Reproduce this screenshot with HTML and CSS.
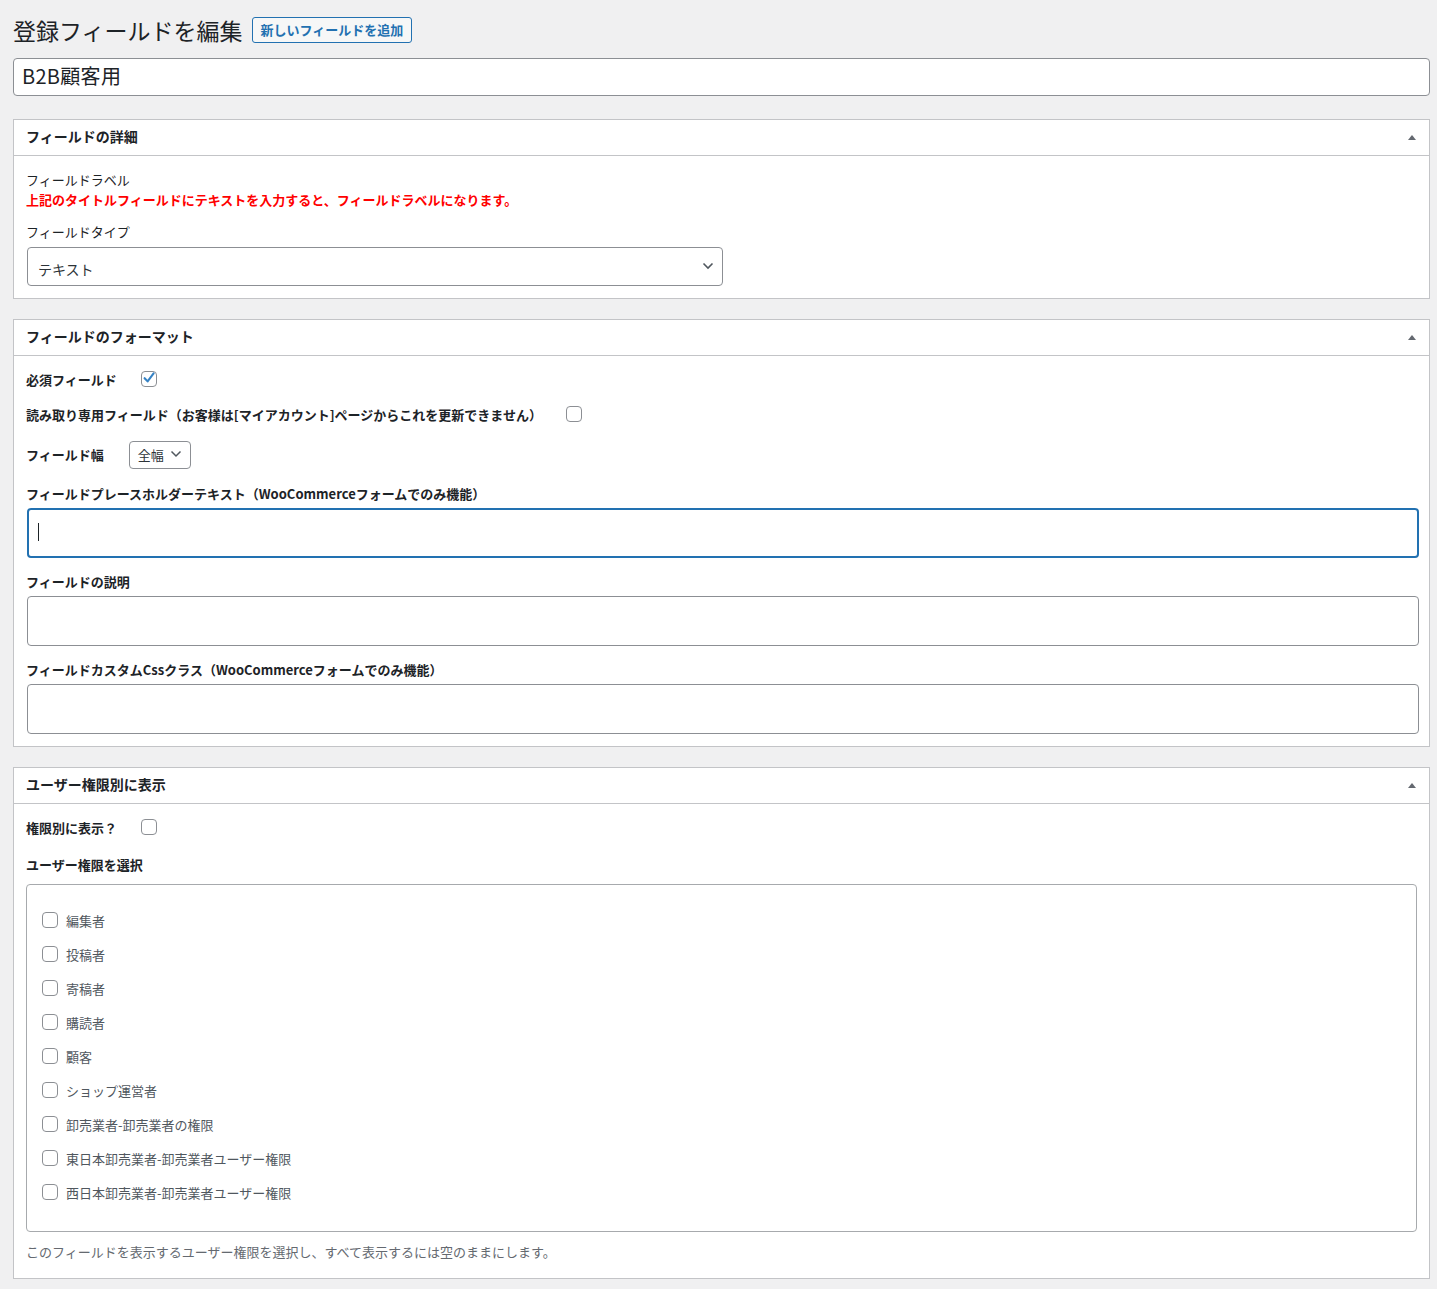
FILE: index.html
```html
<!DOCTYPE html>
<html lang="ja">
<head>
<meta charset="utf-8">
<title>登録フィールドを編集</title>
<link rel="stylesheet" href="styles.css">
</head>
<body>
<div class="wrap">
  <div class="page-head">
    <h1>登録フィールドを編集</h1>
    <a class="page-title-action">新しいフィールドを追加</a>
  </div>
  <input class="title-input" type="text" value="B2B顧客用">

  <div class="postbox postbox-first">
    <div class="postbox-header"><h2>フィールドの詳細</h2><span class="toggle"></span></div>
    <div class="inside inside-details">
      <div class="line">フィールドラベル</div>
      <div class="line red">上記のタイトルフィールドにテキストを入力すると、フィールドラベルになります。</div>
      <div class="line type-label">フィールドタイプ</div>
      <div class="select select-wide">
        <span class="select-text">テキスト</span>
        <svg class="chev" width="12" height="8" viewBox="0 0 12 8"><path d="M1.5 1.5 L6 6 L10.5 1.5" fill="none" stroke="#50575e" stroke-width="1.6"/></svg>
      </div>
    </div>
  </div>

  <div class="postbox">
    <div class="postbox-header"><h2>フィールドのフォーマット</h2><span class="toggle"></span></div>
    <div class="inside inside-format">
      <div class="row row-required">
        <span class="b-label">必須フィールド</span>
        <span class="cb checked"><svg width="16" height="16" viewBox="0 0 16 16"><path d="M3.6 8.2 L6.6 11.4 L12.6 3.4" fill="none" stroke="#3582c4" stroke-width="2.1" stroke-linecap="round" stroke-linejoin="round"/></svg></span>
      </div>
      <div class="row row-readonly">
        <span class="b-label">読み取り専用フィールド（お客様は[マイアカウント]ページからこれを更新できません）</span>
        <span class="cb"></span>
      </div>
      <div class="row row-width">
        <span class="b-label">フィールド幅</span>
        <div class="select select-small">
          <span class="select-text">全幅</span>
          <svg class="chev" width="12" height="8" viewBox="0 0 12 8"><path d="M1.5 1.5 L6 6 L10.5 1.5" fill="none" stroke="#50575e" stroke-width="1.5"/></svg>
        </div>
      </div>
      <div class="b-label field-label first-field">フィールドプレースホルダーテキスト（WooCommerceフォームでのみ機能）</div>
      <div class="field-wrap">
        <input class="text-field focused" type="text">
        <span class="caret"></span>
      </div>
      <div class="b-label field-label">フィールドの説明</div>
      <input class="text-field" type="text">
      <div class="b-label field-label">フィールドカスタムCssクラス（WooCommerceフォームでのみ機能）</div>
      <input class="text-field" type="text">
    </div>
  </div>

  <div class="postbox">
    <div class="postbox-header"><h2>ユーザー権限別に表示</h2><span class="toggle"></span></div>
    <div class="inside inside-roles">
      <div class="row row-required">
        <span class="b-label">権限別に表示？</span>
        <span class="cb"></span>
      </div>
      <div class="b-label field-label roles-label">ユーザー権限を選択</div>
      <div class="roles-box">
        <div class="role"><span class="cb"></span><span>編集者</span></div>
        <div class="role"><span class="cb"></span><span>投稿者</span></div>
        <div class="role"><span class="cb"></span><span>寄稿者</span></div>
        <div class="role"><span class="cb"></span><span>購読者</span></div>
        <div class="role"><span class="cb"></span><span>顧客</span></div>
        <div class="role"><span class="cb"></span><span>ショップ運営者</span></div>
        <div class="role"><span class="cb"></span><span>卸売業者-卸売業者の権限</span></div>
        <div class="role"><span class="cb"></span><span>東日本卸売業者-卸売業者ユーザー権限</span></div>
        <div class="role"><span class="cb"></span><span>西日本卸売業者-卸売業者ユーザー権限</span></div>
      </div>
      <p class="description">このフィールドを表示するユーザー権限を選択し、すべて表示するには空のままにします。</p>
    </div>
  </div>
</div>
</body>
</html>
```

FILE: styles.css
```css
* { box-sizing: border-box; }

body {
  margin: 0;
  background: #f0f0f1;
  font-family: "Noto Sans CJK JP", "Noto Sans", sans-serif;
  font-size: 13px;
  color: #3c434a;
}

.wrap {
  padding: 15px 7px 11px 13px;
}

.page-head {
  display: flex;
  align-items: center;
  gap: 9px;
  height: 30px;
}

.page-head h1 {
  margin: 0;
  font-size: 23px;
  font-weight: 400;
  line-height: 30px;
  color: #1d2327;
}

.page-title-action {
  display: inline-flex;
  align-items: center;
  height: 26px;
  padding: 0 8px 1px;
  border: 1px solid #2271b1;
  border-radius: 3px;
  background: #f6f7f7;
  color: #2271b1;
  font-size: 13px;
  font-weight: 600;
  line-height: 1;
}

.title-input {
  display: block;
  width: 100%;
  height: 38px;
  margin-top: 13px;
  padding: 0 8px 4px;
  border: 1px solid #8c8f94;
  border-radius: 4px;
  background: #fff;
  font-family: inherit;
  font-size: 20px;
  letter-spacing: 0.3px;
  color: #1d2327;
  outline: none;
}

.postbox {
  margin-top: 20px;
  border: 1px solid #c3c4c7;
  background: #fff;
}

.postbox-first {
  margin-top: 23px;
}

.postbox-header {
  display: flex;
  align-items: center;
  justify-content: space-between;
  height: 36px;
  padding: 0 13px 0 12px;
  border-bottom: 1px solid #c3c4c7;
}

.postbox-header h2 {
  margin: -3px 0 0;
  font-size: 14px;
  font-weight: 700;
  line-height: 1;
  color: #1d2327;
}

.toggle {
  width: 0;
  height: 0;
  border-left: 4px solid transparent;
  border-right: 4px solid transparent;
  border-bottom: 5px solid #646970;
  margin-top: -1px;
}

.inside {
  padding: 12px 12px 12px 12px;
}

.inside-details {
  padding-top: 14px;
  padding-bottom: 12px;
}

.line {
  line-height: 20px;
  color: #1d2327;
}

.red {
  color: #ff0000;
  font-weight: 700;
}

.type-label {
  margin-top: 12px;
}

.select {
  position: relative;
  display: flex;
  align-items: center;
  border: 1px solid #8c8f94;
  border-radius: 4px;
  background: #fff;
  color: #2c3338;
}

.select-wide {
  width: 696px;
  height: 39px;
  margin-top: 5px;
  margin-left: 1px;
  padding: 4px 10px 0;
  font-size: 14px;
}

.select-small {
  width: 62px;
  height: 28px;
  margin-left: 25px;
  padding: 0 8px 2px;
  font-size: 13px;
}

.chev {
  position: absolute;
  right: 8px;
  top: 50%;
  margin-top: -5px;
}

.row {
  display: flex;
  align-items: center;
  height: 24px;
}

.b-label {
  font-weight: 700;
  color: #1d2327;
  line-height: 20px;
}

.cb {
  position: relative;
  display: inline-block;
  flex: none;
  width: 16px;
  height: 16px;
  border: 1px solid #8c8f94;
  border-radius: 4px;
  background: #fff;
}

.cb svg {
  position: absolute;
  left: -1px;
  top: -2px;
}

.row-required .cb {
  margin-left: 24px;
  margin-top: -2px;
}

.row-readonly {
  margin-top: 11px;
}

.row-readonly .cb {
  margin-left: 24px;
  margin-top: -2px;
}

.row-width {
  margin-top: 14px;
  height: 28px;
}

.field-label {
  margin-top: 14px;
}

.first-field {
  margin-top: 15px;
}

.field-wrap {
  position: relative;
}

.text-field {
  display: block;
  width: calc(100% + 1px);
  height: 50px;
  margin: 4px 0 0 1px;
  border: 1px solid #8c8f94;
  border-radius: 4px;
  background: #fff;
  outline: none;
  font-family: inherit;
}

.text-field.focused {
  border: 2px solid #2271b1;
}

.caret {
  position: absolute;
  left: 12px;
  top: 15px;
  width: 1px;
  height: 18px;
  background: #1d2327;
}

.roles-label {
  margin-top: 15px;
}

.roles-box {
  margin-top: 9px;
  padding: 19px 15px 21px;
  border: 1px solid #a7aaad;
  border-radius: 4px;
}

.role {
  display: flex;
  align-items: center;
  gap: 8px;
  height: 34px;
  color: #50575e;
  line-height: 20px;
}

.role .cb {
  margin-top: -2px;
}

.description {
  margin: 10px 0 0;
  padding-bottom: 4px;
  line-height: 20px;
  color: #646970;
}
```
